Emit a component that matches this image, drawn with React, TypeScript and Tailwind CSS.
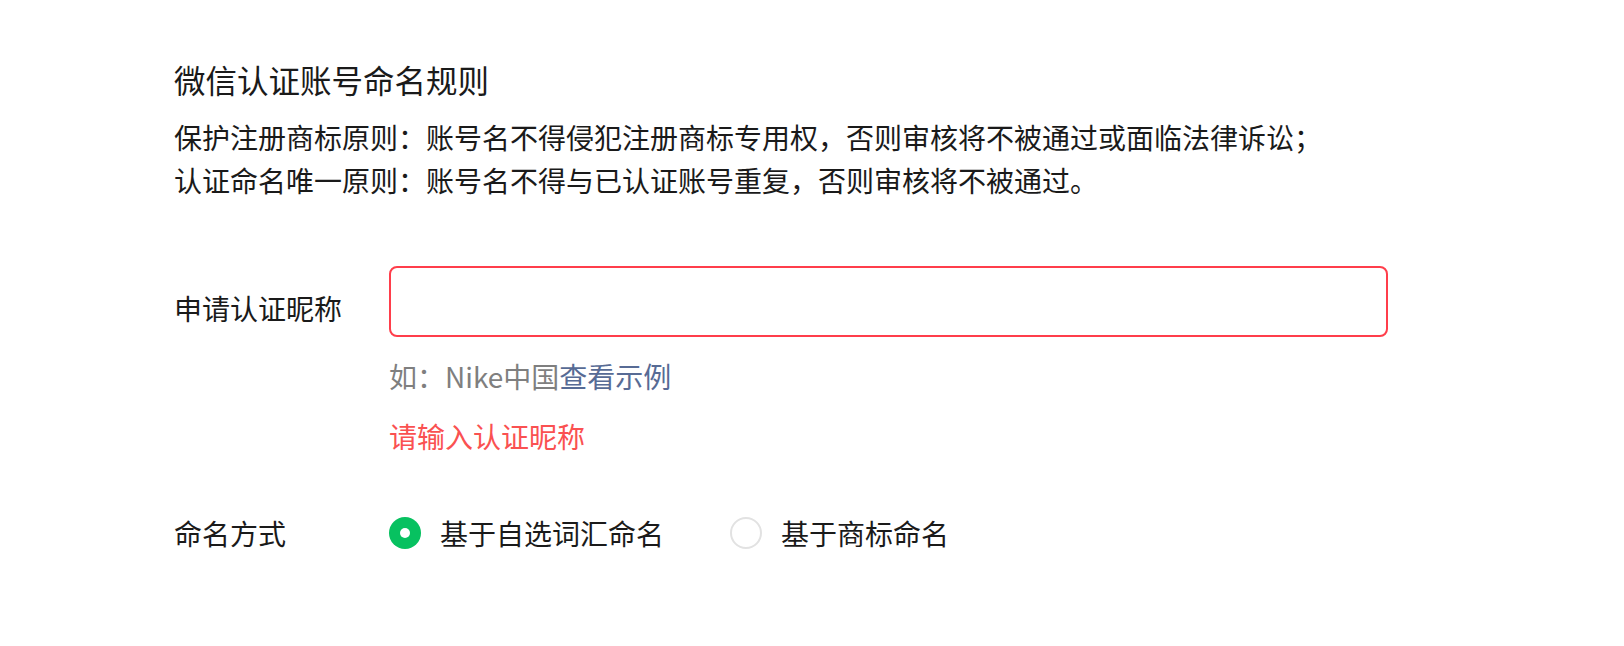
import { useState } from 'react';

const font = { fontFamily: '"Noto Sans CJK SC", "Noto Sans", sans-serif' };

export default function App() {
  const [name, setName] = useState('');
  const [mode, setMode] = useState<'word' | 'brand'>('word');

  const options: { key: 'word' | 'brand'; label: string }[] = [
    { key: 'word', label: '基于自选词汇命名' },
    { key: 'brand', label: '基于商标命名' },
  ];

  return (
    <div className="min-h-screen bg-white pl-[174px] pt-[57px] text-[#1a1a1a]" style={font}>
      <h2 className="text-[31.5px] leading-[44px] font-normal">微信认证账号命名规则</h2>
      <div className="mt-[15px] text-[28px] leading-[42.5px]">
        <p>保护注册商标原则：账号名不得侵犯注册商标专用权，否则审核将不被通过或面临法律诉讼；</p>
        <p>认证命名唯一原则：账号名不得与已认证账号重复，否则审核将不被通过。</p>
      </div>

      <div className="mt-[65px] flex items-start">
        <label className="w-[215px] shrink-0 pt-[21px] text-[28px] leading-[42px]">申请认证昵称</label>
        <div className="flex flex-col">
          <input
            value={name}
            onChange={(e) => setName(e.target.value)}
            className="h-[71px] w-[999px] rounded-[8px] border-2 border-[#ff3e4b] px-4 text-[28px] outline-none"
          />
          <div className="mt-[18px] text-[28px] leading-[42px] text-[#7f7f7f]">
            如：Nike中国<a className="text-[#576b95]">查看示例</a>
          </div>
          <div className="mt-[18px] text-[28px] leading-[42px] text-[#fa5151]">请输入认证昵称</div>
        </div>
      </div>

      <div className="mt-[55px] flex items-center">
        <span className="w-[215px] shrink-0 text-[28px] leading-[42px]">命名方式</span>
        <div className="flex items-center gap-[66px]">
          {options.map((o) => (
            <button key={o.key} onClick={() => setMode(o.key)} className="flex items-center gap-[19px]">
              {mode === o.key ? (
                <span className="flex h-[32px] w-[32px] items-center justify-center rounded-full bg-[#07c160]">
                  <span className="h-[10px] w-[10px] rounded-full bg-white" />
                </span>
              ) : (
                <span className="h-[32px] w-[32px] rounded-full border-2 border-[#e2e2e2]" />
              )}
              <span className="text-[28px] leading-[42px]">{o.label}</span>
            </button>
          ))}
        </div>
      </div>
    </div>
  );
}
